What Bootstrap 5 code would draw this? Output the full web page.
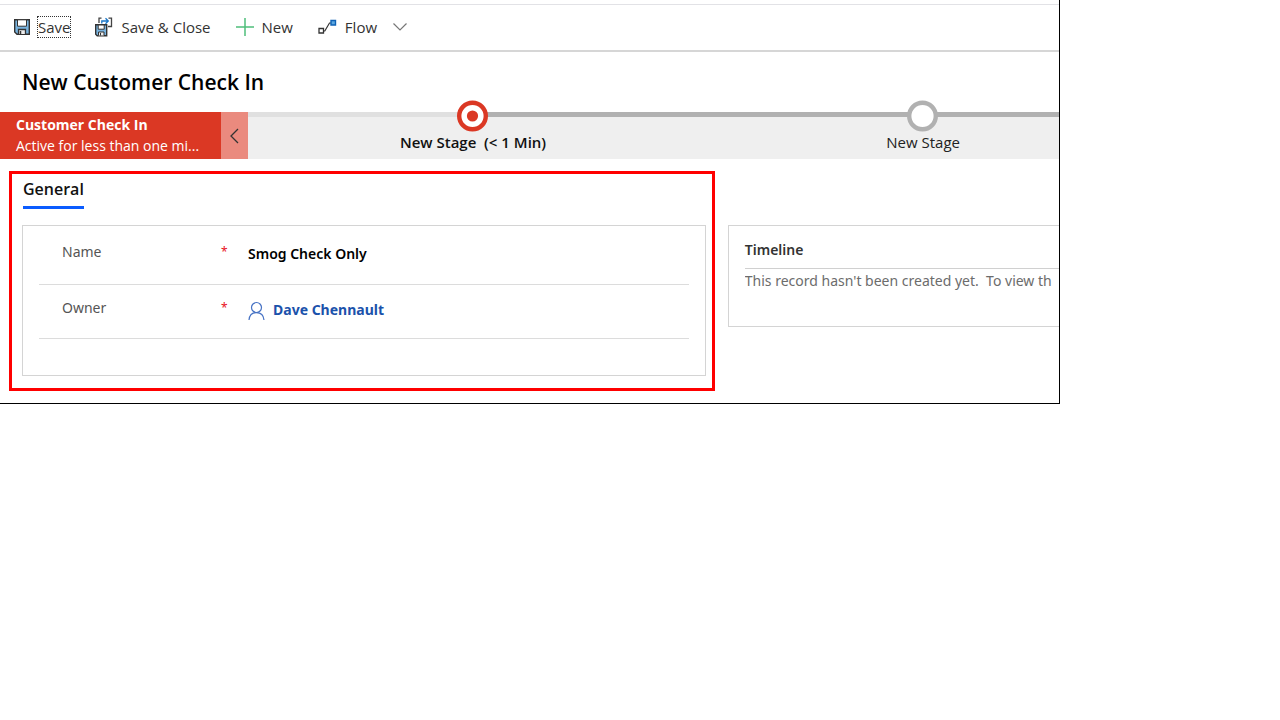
<!DOCTYPE html>
<html lang="en">
<head>
<meta charset="utf-8">
<meta name="viewport" content="width=device-width, initial-scale=1">
<title>New Customer Check In</title>
<link href="https://cdn.jsdelivr.net/npm/bootstrap@5.3.0/dist/css/bootstrap.min.css" rel="stylesheet">
<style>
  body { font-family: "Open Sans", "Noto Sans", sans-serif; font-size: 14px; line-height: 20px; color: #333; background: #fff; }
  .app-frame { margin-right: 220px; padding-top: 4px; padding-bottom: 12px; border-right: 1px solid #000; border-bottom: 1px solid #000; }
  .command-bar { height: 48px; padding: 0 14px 2px; gap: 25px; border-top: 1px solid #e2e2e6; border-bottom: 2px solid #d6d6d6; }
  .command { border: 0; padding: 0; background: none; color: #333; gap: 8px; font-size: 15px; line-height: 20px; }
  .focus-box { outline: 1px dotted #333; }
  .record-title { font-size: 21px; line-height: 28px; font-weight: 600; color: #000; padding: 16px 22px; }
  .process { height: 47px; background: #efefef; }
  .process-name { width: 221px; padding: 2px 16px 0; background: #db3824; color: #fff; line-height: 21px; }
  .process-toggle { width: 27px; border: 0; padding: 0 0 2px; background: #ea8a7e; }
  .stages { min-width: 0; overflow-x: clip; }
  .stage { flex: 0 0 55.5%; padding: 20px 0 0; color: #222; border: 0; background: none; font-size: 15px; line-height: 20px; }
  .stage-label { display: block; }
  .stage-track { height: 5px; background: #b1b1b1; }
  .stage-track.is-first { background: linear-gradient(90deg, #e0e0e0 50%, #b1b1b1 50%); }
  .stage-dot { top: -12px; }
  .stage.is-active { font-weight: 600; color: #111; }
  .form-area { padding-top: 12px; }
  .main-column { flex: 0 0 67.5%; padding-left: 9px; }
  .highlight { border: 3px solid #f00; padding: 5px 6px 12px 10px; }
  .tab-link { display: inline-block; margin-left: 1px; font-size: 16px; line-height: 20px; font-weight: 600; color: #111; padding: 0 0 7px; border-bottom: 3px solid #0b5cff; text-decoration: none; }
  .panel { border: 1px solid #d4d4d4; font-family: "Noto Sans", "Open Sans", sans-serif; }
  .fields { margin-top: 16px; padding: 0 16px 36px; }
  .field-row { padding-left: 23px; border-bottom: 1px solid #dcdcdc; }
  .field-row.name-row { height: 59px; padding-top: 16px; }
  .field-row.owner-row { height: 54px; padding-top: 13px; }
  .field-label { width: 159px; color: #555; }
  .required { width: 27px; color: #e81123; font-size: 12px; }
  .field-value { padding: 2px 0 0; border: 0; color: #000; font-size: 14px; line-height: 20px; font-weight: 600; background: none; }
  .owner-link { color: #1b52ab; font-size: 14px; font-weight: 700; text-decoration: none; gap: 8px; padding-top: 2px; }
  .side-column { min-width: 0; padding-left: 13px; padding-top: 54px; overflow: hidden; }
  .timeline { height: 102px; padding: 14px 0 0 16px; border-right: 0; }
  .timeline h2 { font-size: 14px; line-height: 20px; font-weight: 600; color: #333; padding-bottom: 8px; border-bottom: 1px solid #d0d0d0; }
  .timeline p { color: #6c6c6c; line-height: 24px; overflow: hidden; }
</style>
</head>
<body>
<main class="app-frame">
  <div class="command-bar d-flex align-items-center" role="toolbar" aria-label="Record commands">
    <button class="command d-flex align-items-center" type="button">
      <svg width="16" height="16" viewBox="0 0 16 16" aria-hidden="true"><path d="M.7.7h14.6v14.6H3L.7 13z" fill="#79b4e0" stroke="#333" stroke-width="1.4"/><path d="M3.5.8h9v6.4h-9z" fill="#fff" stroke="#333"/><path d="M4.500 15v-4.500h7V15" fill="#eee" stroke="#333" stroke-width="1.3"/><path d="M6.500 12v3" stroke="#333" stroke-width="1.5"/></svg>
      <span class="focus-box">Save</span>
    </button>
    <button class="command d-flex align-items-center" type="button">
      <svg width="18" height="20" viewBox="0 0 18 20" aria-hidden="true"><path d="M.7 7.700h11v11H2.200L.7 17.200z" fill="#79b4e0" stroke="#333" stroke-width="1.4"/><path d="M3.200 8h6v4.200h-6z" fill="#fff" stroke="#333"/><path d="M3.500 18.500V15H9v3.500" fill="#eee" stroke="#333"/><path d="M5.500 16v2.500" stroke="#333"/><path d="M4 6V1.200h2.500M13.500 1.200h3v8.300H13" fill="none" stroke="#444" stroke-width="1.300"/><path d="M6.800 6.500V4h6M10.500 1.200 13.300 4l-2.800 2.800" fill="none" stroke="#1976c8" stroke-width="1.300"/></svg>
      <span>Save &amp; Close</span>
    </button>
    <button class="command d-flex align-items-center" type="button">
      <svg width="18" height="18" viewBox="0 0 18 18" aria-hidden="true"><path d="M9 0v18M0 9h18" stroke="#4fbf7b" stroke-width="1.500"/></svg>
      <span>New</span>
    </button>
    <button class="command d-flex align-items-center" type="button">
      <svg width="19" height="16" viewBox="0 0 19 16" aria-hidden="true"><path d="M1 9.500h4.500V14H1z" fill="#fff" stroke="#333" stroke-width="1.300"/><path d="M5.500 12h1.300L11.500 4H13" fill="none" stroke="#333" stroke-width="1.200"/><path d="M13 1.500h4.500V6H13z" fill="#5ba7e0" stroke="#0f62b5" stroke-width="1.400"/></svg>
      <span>Flow</span>
      <svg class="ms-2" width="14" height="8" viewBox="0 0 14 8" aria-hidden="true"><path d="M.5.500 7 7 13.500.500" fill="none" stroke="#777" stroke-width="1.200"/></svg>
    </button>
  </div>

  <h1 class="record-title m-0">New Customer Check In</h1>

  <section class="process d-flex" aria-label="Business process">
    <div class="process-name flex-shrink-0">
      <div class="fw-bold">Customer Check In</div>
      <div>Active for less than one mi...</div>
    </div>
    <button class="process-toggle flex-shrink-0" type="button" aria-label="Collapse">
      <svg width="9" height="16" viewBox="0 0 9 16" aria-hidden="true"><path d="M8 1 1 8l7 7" fill="none" stroke="#333" stroke-width="1.300"/></svg>
    </button>
    <div class="stages d-flex flex-grow-1 align-items-start">
      <button class="stage is-active position-relative" type="button">
        <span class="stage-track is-first position-absolute top-0 start-0 w-100"></span>
        <svg class="stage-dot position-absolute start-50 translate-middle-x" width="32" height="32" viewBox="0 0 32 32" aria-hidden="true"><circle cx="15.500" cy="16" r="13.300" fill="#fff" stroke="#db3824" stroke-width="4.400"/><circle cx="15.500" cy="16" r="5.600" fill="#db3824"/></svg>
        <span class="stage-label">New Stage&nbsp; (&lt; 1 Min)</span>
      </button>
      <button class="stage position-relative" type="button">
        <span class="stage-track position-absolute top-0 start-0 w-100"></span>
        <svg class="stage-dot position-absolute start-50 translate-middle-x" width="32" height="32" viewBox="0 0 32 32" aria-hidden="true"><circle cx="15.500" cy="16" r="13.300" fill="#fff" stroke="#b1b1b1" stroke-width="4.400"/></svg>
        <span class="stage-label">New Stage</span>
      </button>
    </div>
  </section>

  <div class="form-area d-flex">
    <div class="main-column">
      <section class="highlight">
        <a class="tab-link" href="#general">General</a>
        <form class="panel fields" id="general">
          <div class="field-row name-row d-flex">
            <label class="field-label" for="name">Name</label>
            <span class="required">*</span>
            <input class="field-value flex-grow-1 align-self-start" id="name" type="text" value="Smog Check Only">
          </div>
          <div class="field-row owner-row d-flex">
            <span class="field-label" id="owner-label">Owner</span>
            <span class="required">*</span>
            <a class="owner-link d-flex align-self-start" href="#owner" aria-describedby="owner-label">
              <svg width="17" height="20" viewBox="0 0 17 20" aria-hidden="true"><circle cx="8.500" cy="7.500" r="5" fill="none" stroke="#4672c4" stroke-width="1.200"/><path d="M1 20c.4-4.700 3.500-7.400 7.500-7.400s7.100 2.700 7.500 7.400" fill="none" stroke="#4672c4" stroke-width="1.200"/></svg>
              <span>Dave Chennault</span>
            </a>
          </div>
        </form>
      </section>
    </div>
    <aside class="side-column flex-grow-1">
      <div class="panel timeline">
        <h2 class="m-0">Timeline</h2>
        <p class="m-0 text-nowrap">This record hasn't been created yet.&nbsp; To view th</p>
      </div>
    </aside>
  </div>
</main>
<script src="https://cdn.jsdelivr.net/npm/bootstrap@5.3.0/dist/js/bootstrap.bundle.min.js"></script>
</body>
</html>
